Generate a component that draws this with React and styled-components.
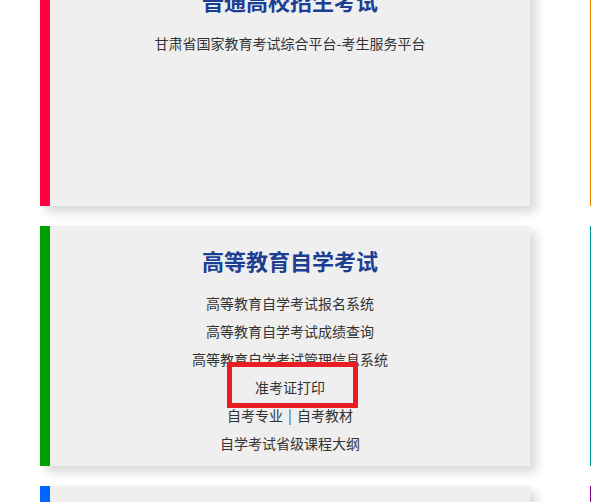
import styled, { createGlobalStyle } from "styled-components"

const GlobalStyle = createGlobalStyle`
  html, body {
    margin: 0;
    padding: 0;
    background: #fff;
    overflow: hidden;
  }
  body {
    font-family: "Noto Sans CJK SC", "Noto Sans", sans-serif;
  }
`

const Page = styled.div`
  width: 591px;
  height: 502px;
  overflow: hidden;
`

const Grid = styled.div`
  display: grid;
  grid-template-columns: 490px 490px;
  column-gap: 60px;
  row-gap: 20px;
  padding-left: 40px;
  margin-top: -34px;
`

const Card = styled.div`
  position: relative;
  box-sizing: border-box;
  height: 240px;
  background: #efefef;
  border-left: 10px solid ${({ color }) => color};
  box-shadow: 6px 6px 10px rgba(0, 0, 0, 0.16);
  text-align: center;
  padding-top: 19px;
`

const Title = styled.h2`
  margin: 0 0 14px;
  font-size: 22px;
  line-height: 30px;
  font-weight: bold;
  color: #1c3f94;
`

const LinkList = styled.ul`
  list-style: none;
  margin: 0;
  padding: 0;
`

const Item = styled.li`
  font-size: 14px;
  line-height: 28px;
  color: #333;
`

const Link = styled.a`
  color: #333;
  text-decoration: none;
`

const Sep = styled.span`
  margin: 0 5px;
  color: #2d4f8a;
`

const Highlight = styled.div`
  position: absolute;
  left: 177px;
  top: 136px;
  width: 131px;
  height: 46px;
  box-sizing: border-box;
  border: 5px solid #ea1c24;
  pointer-events: none;
`

const cards = [
  {
    color: "#ff0040",
    title: "普通高校招生考试",
    links: [["甘肃省国家教育考试综合平台-考生服务平台"]],
  },
  { color: "#f08300" },
  {
    color: "#00a000",
    title: "高等教育自学考试",
    links: [
      ["高等教育自学考试报名系统"],
      ["高等教育自学考试成绩查询"],
      ["高等教育自学考试管理信息系统"],
      ["准考证打印"],
      ["自考专业", "自考教材"],
      ["自学考试省级课程大纲"],
    ],
    highlight: true,
  },
  { color: "#009999" },
  { color: "#0066ff" },
  { color: "#800080" },
]

const App = () => (
  <Page>
    <GlobalStyle />
    <Grid>
      {cards.map((card, i) => (
        <Card key={i} color={card.color}>
          {card.title && <Title>{card.title}</Title>}
          {card.links && (
            <LinkList>
              {card.links.map((group, j) => (
                <Item key={j}>
                  {group.map((text, k) => (
                    <span key={k}>
                      {k > 0 && <Sep>|</Sep>}
                      <Link href="#">{text}</Link>
                    </span>
                  ))}
                </Item>
              ))}
            </LinkList>
          )}
          {card.highlight && <Highlight />}
        </Card>
      ))}
    </Grid>
  </Page>
)

export default App
